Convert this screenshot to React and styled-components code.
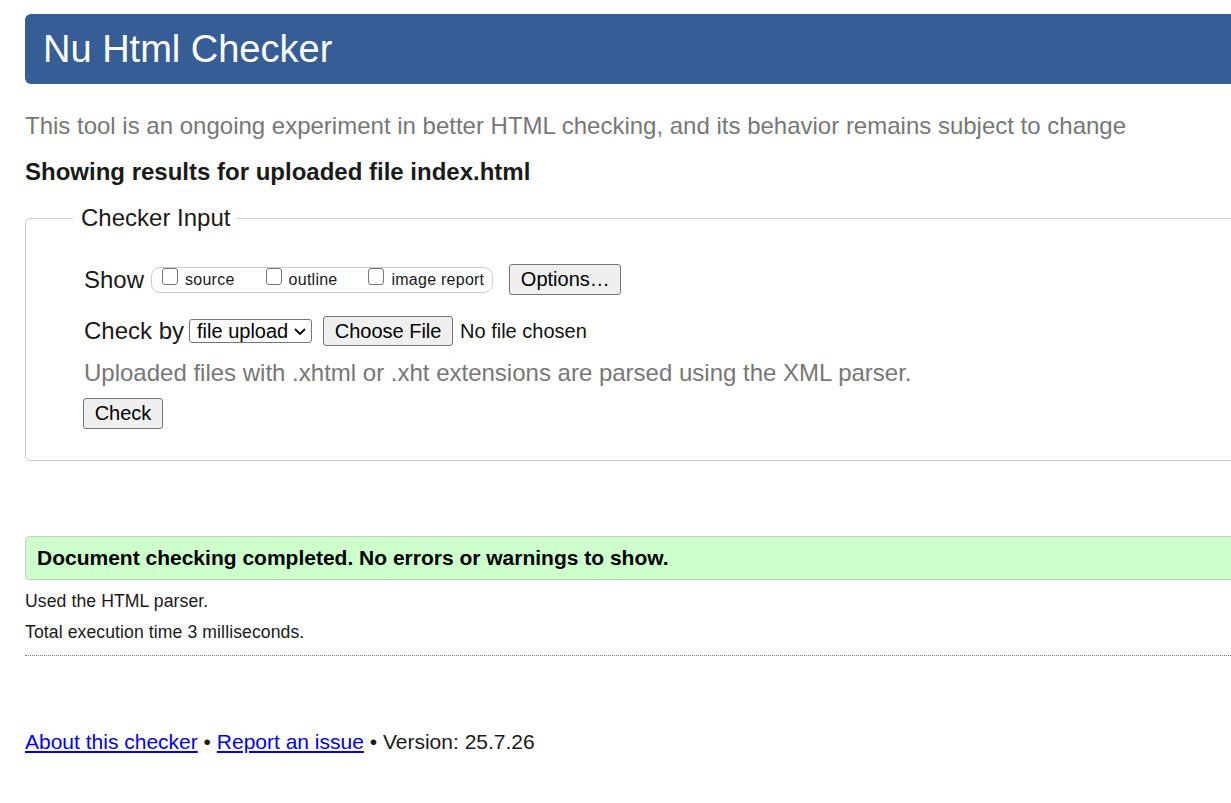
import React from "react";
import styled, { createGlobalStyle } from "styled-components";

const GlobalStyle = createGlobalStyle`
  html, body { margin: 0; padding: 0; background: #fff; overflow: hidden; }
  body { font-family: "Liberation Sans", Arial, sans-serif; color: #222; }
`;

const Page = styled.div`
  width: 1330px;
  padding: 14px 0 40px 25px;
  display: flex;
  flex-direction: column;
`;

const Header = styled.h1`
  margin: 0;
  height: 70px;
  display: flex;
  align-items: center;
  padding-left: 18px;
  background: #365d95;
  color: #fff;
  font-size: 38px;
  font-weight: normal;
  border-radius: 6px 0 0 6px;
`;

const Subtitle = styled.p`
  margin: 29px 0 0;
  font-size: 24px;
  line-height: 26px;
  color: #777;
`;

const Showing = styled.h2`
  margin: 19px 0 0;
  font-size: 24px;
  line-height: 28px;
  font-weight: bold;
  color: #1a1a1a;
`;

const Fieldset = styled.fieldset`
  margin: 18px 0 0;
  padding: 0 0 31px 45px;
  border: 1px solid #ccc;
  border-radius: 5px;
  min-width: 0;
`;

const Legend = styled.legend`
  margin-left: 2px;
  padding: 0 7px 0 8px;
  font-size: 24px;
  line-height: 28px;
  color: #1a1a1a;
`;

const Inner = styled.div`
  padding: 32px 0 0 13px;
  display: flex;
  flex-direction: column;
  align-items: flex-start;
`;

const Row = styled.div`
  display: flex;
  align-items: center;
  height: ${(p) => p.$h}px;
  margin-top: ${(p) => p.$mt || 0}px;
`;

const Label = styled.span`
  font-size: 24px;
  line-height: 28px;
  color: #1a1a1a;
  margin-right: ${(p) => p.$mr}px;
`;

const CheckGroup = styled.div`
  display: flex;
  align-items: flex-start;
  height: 24px;
  padding: 0 8px 0 10px;
  border: 1px solid #ccc;
  border-radius: 9px;
  margin-right: 16px;
`;

const Option = styled.label`
  display: flex;
  align-items: flex-start;
  margin-left: ${(p) => p.$ml || 0}px;
`;

const Box = styled.span`
  box-sizing: border-box;
  display: block;
  margin: 0 7px 0 0;
  width: 16px;
  height: 17px;
  border: 1px solid #767676;
  border-radius: 3px;
  background: #fff;
`;

const OptionText = styled.span`
  margin-top: 3px;
  font-size: 16px;
  letter-spacing: 0.25px;
  line-height: 18px;
  color: #1a1a1a;
`;

const Button = styled.button`
  box-sizing: border-box;
  height: ${(p) => p.$h}px;
  width: ${(p) => p.$w}px;
  margin: 0 ${(p) => p.$mr || 0}px 0 ${(p) => p.$ml || 0}px;
  padding: 0;
  font-family: "Liberation Sans", Arial, sans-serif;
  font-size: 20px;
  color: #000;
  background: #efefef;
  border: 1px solid #767676;
  border-radius: 3px;
`;

const SelectBox = styled.div`
  box-sizing: border-box;
  display: flex;
  align-items: center;
  width: 123px;
  height: 24px;
  padding: 0 4px 0 7px;
  margin-right: 11px;
  border: 1px solid #767676;
  border-radius: 3px;
  background: #fff;
  font-size: 20px;
  color: #000;
`;

const SelectText = styled.span`
  flex: 1;
  line-height: 22px;
`;

const Plain = styled.span`
  font-size: 20px;
  color: #111;
`;

const Hint = styled.p`
  margin: 14px 0 0;
  font-size: 24px;
  line-height: 26px;
  color: #777;
`;

const Result = styled.div`
  margin-top: 75px;
  box-sizing: border-box;
  height: 44px;
  display: flex;
  align-items: center;
  padding-left: 11px;
  background: #ccffcc;
  border: 1px solid #ccc;
  border-radius: 4px;
  font-size: 21px;
  font-weight: bold;
  color: #000;
`;

const Info = styled.p`
  margin: ${(p) => p.$mt}px 0 0;
  font-size: 17.6px;
  letter-spacing: 0.1px;
  line-height: 31px;
  color: #1a1a1a;
`;

const Rule = styled.hr`
  margin: 7px 0 0;
  border: 0;
  border-top: 1px dotted #777;
  height: 0;
`;

const Footer = styled.p`
  margin: 74px 0 0;
  font-size: 21px;
  line-height: 24px;
  color: #1a1a1a;
`;

const Link = styled.a`
  color: #0000ee;
  text-decoration: underline;
`;

const Chevron = () => (
  <svg width="14" height="9" viewBox="0 0 14 9">
    <path d="M2 2 L7 7 L12 2" fill="none" stroke="#000" strokeWidth="1.8" />
  </svg>
);

export default function App() {
  return (
    <>
      <GlobalStyle />
      <Page>
        <Header>Nu Html Checker</Header>
        <Subtitle>
          This tool is an ongoing experiment in better HTML checking, and its behavior remains subject to change
        </Subtitle>
        <Showing>Showing results for uploaded file index.html</Showing>
        <Fieldset>
          <Legend>Checker Input</Legend>
          <Inner>
            <Row $h={31}>
              <Label $mr={7}>Show</Label>
              <CheckGroup>
                <Option>
                  <Box role="checkbox" aria-checked="false" />
                  <OptionText>source</OptionText>
                </Option>
                <Option $ml={31}>
                  <Box role="checkbox" aria-checked="false" />
                  <OptionText>outline</OptionText>
                </Option>
                <Option $ml={31}>
                  <Box role="checkbox" aria-checked="false" />
                  <OptionText>image report</OptionText>
                </Option>
              </CheckGroup>
              <Button $w={112} $h={31}>Options…</Button>
            </Row>
            <Row $h={30} $mt={21}>
              <Label $mr={5}>Check by</Label>
              <SelectBox>
                <SelectText>file upload</SelectText>
                <Chevron />
              </SelectBox>
              <Button $w={130} $h={30} $mr={7}>Choose File</Button>
              <Plain>No file chosen</Plain>
            </Row>
            <Hint>Uploaded files with .xhtml or .xht extensions are parsed using the XML parser.</Hint>
            <Row $h={31} $mt={12}>
              <Button $w={80} $h={31} $ml={-1}>Check</Button>
            </Row>
          </Inner>
        </Fieldset>
        <Result>Document checking completed. No errors or warnings to show.</Result>
        <Info $mt={6}>Used the HTML parser.</Info>
        <Info $mt={0}>Total execution time 3 milliseconds.</Info>
        <Rule />
        <Footer>
          <Link href="#about">About this checker</Link> • <Link href="#issue">Report an issue</Link> • Version: 25.7.26
        </Footer>
      </Page>
    </>
  );
}
